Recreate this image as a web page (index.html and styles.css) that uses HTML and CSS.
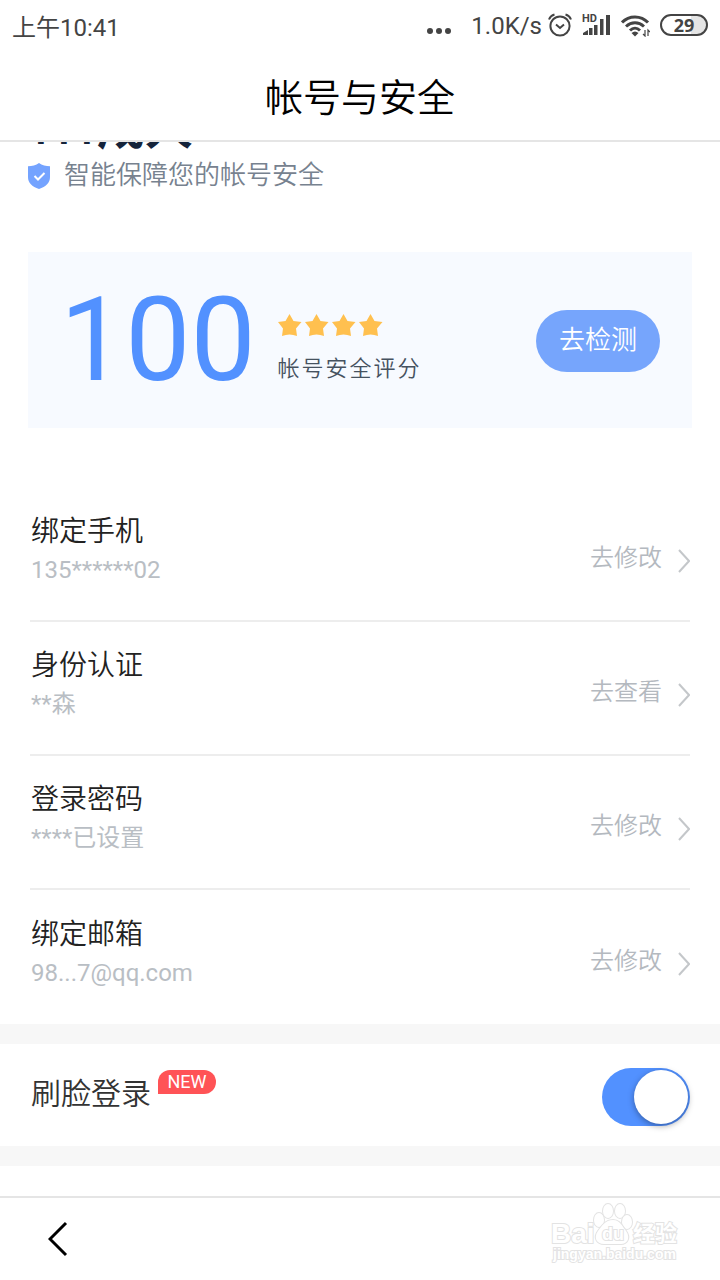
FILE: index.html
```
<!DOCTYPE html>
<html lang="zh-CN">
<head>
  <meta charset="UTF-8">
  <meta name="viewport" content="width=device-width, initial-scale=1.0">
  <title>帐号与安全</title>
  <link rel="stylesheet" href="styles.css">
</head>
<body>

  <!-- 状态栏 -->
  <div class="status-bar">
    <span class="time">上午10:41</span>
    <svg class="dots" width="24" height="8" viewBox="0 0 24 8" fill="#444">
      <circle cx="3" cy="4" r="3"/><circle cx="12" cy="4" r="3"/><circle cx="21" cy="4" r="3"/>
    </svg>
    <span class="speed">1.0K/s</span>
    <div class="status-icons">
      <svg width="24" height="24" viewBox="0 0 24 24" fill="none" stroke="#444" stroke-width="2">
        <circle cx="12" cy="13" r="9.6"/>
        <path d="M8 11.500l4 3.500 4-3.500M1 6.500C2 4 4 2.200 6.500 1.500M23 6.500C22 4 20 2.200 17.500 1.500"/>
      </svg>
      <svg width="29" height="24" viewBox="0 0 29 24" fill="#444">
        <text x="0" y="9" class="hd">HD</text>
        <path d="M1 22v-2l5-3v5zM7 15h3.500v7H7zM12 12h3.500v10H12zM18 6h3.500v16H18zM24 2h4v20h-4z"/>
      </svg>
      <svg width="29" height="24" viewBox="0 0 29 24" fill="none" stroke="#444" stroke-width="3">
        <path d="M1 9.500C8 2 20 2 27 9.500M5 13.500C10.500 8.500 17.500 8.500 23 13.500M9 17.500C12 14.500 16 14.500 19 17.500"/>
        <path d="M10.500 20q3.500-3 7 0l-3.500 3.500z" fill="#444" stroke="none"/>
        <path d="M24 17v6l-2-2M27 23v-6l2 2" stroke-width="1.200"/>
      </svg>
      <span class="battery">29</span>
    </div>
  </div>

  <header class="title-bar">
    <h1>帐号与安全</h1>
  </header>

  <main>
    <section class="intro">
      <h2><span>111</span>成人</h2>
      <p>
        <svg width="22" height="26" viewBox="0 0 22 26">
          <path d="M11 0C14 2.500 18 3.200 22 3.200V14c0 6-4 9.500-11 12C4 23.500 0 20 0 14V3.200C4 3.200 8 2.500 11 0z" fill="#74a3ff"/>
          <path d="M6.500 13l3.500 3.500 6.500-6.500" fill="none" stroke="#fff" stroke-width="2"/>
        </svg>
        智能保障您的帐号安全
      </p>
    </section>

    <section class="score-card">
      <strong class="score">100</strong>
      <div class="rating">
        <svg width="106" height="24" viewBox="0 0 106 24" fill="#ffc04f">
          <defs><path id="star" d="M11.500 0l4 7 8 1-5.500 6.500L19 22Q11.500 19 4 22L5 14.500 0 8l7.500-1z"/></defs>
          <use href="#star" x="0"/><use href="#star" x="27"/><use href="#star" x="54"/><use href="#star" x="81"/>
        </svg>
        <span>帐号安全评分</span>
      </div>
      <button class="check-btn">去检测</button>
    </section>

    <ul class="settings">
      <li>
        <div class="info"><h3>绑定手机</h3><p>135******02</p></div>
        <a href="#">去修改 <svg width="12" height="24" viewBox="0 0 12 24"><path d="M1 1l10 11L1 23"/></svg></a>
      </li>
      <li>
        <div class="info"><h3>身份认证</h3><p>**森</p></div>
        <a href="#">去查看 <svg width="12" height="24" viewBox="0 0 12 24"><path d="M1 1l10 11L1 23"/></svg></a>
      </li>
      <li>
        <div class="info"><h3>登录密码</h3><p>****已设置</p></div>
        <a href="#">去修改 <svg width="12" height="24" viewBox="0 0 12 24"><path d="M1 1l10 11L1 23"/></svg></a>
      </li>
      <li>
        <div class="info"><h3>绑定邮箱</h3><p>98...7@qq.com</p></div>
        <a href="#">去修改 <svg width="12" height="24" viewBox="0 0 12 24"><path d="M1 1l10 11L1 23"/></svg></a>
      </li>
    </ul>

    <section class="face-login">
      <label for="face">刷脸登录</label>
      <span class="new">NEW</span>
      <input type="checkbox" id="face" class="switch" checked>
    </section>
  </main>

  <footer class="bottom-bar">
    <button class="back" aria-label="返回">
      <svg width="20" height="36" viewBox="0 0 20 36"><path d="M18 2L2 18l16 16"/></svg>
    </button>
    <svg class="watermark" width="130" height="64" viewBox="0 0 130 64">
      <ellipse cx="49" cy="18" rx="5" ry="7"/><ellipse cx="58" cy="9" rx="5" ry="7"/>
      <ellipse cx="70" cy="9" rx="5" ry="7"/><ellipse cx="77" cy="20" rx="5" ry="7"/>
      <path d="M63 18c7 0 9 6 13 11 5 7 1 13-5 13H54c-7 0-11-6-6-13 4-5 7-11 15-11z"/>
      <text x="1" y="41" class="wm-big">Bai</text>
      <text x="52" y="38" class="wm-du">du</text>
      <text x="83" y="39" class="wm-cn">经验</text>
      <text x="3" y="57" class="wm-url">jingyan.baidu.com</text>
    </svg>
  </footer>

</body>
</html>
```
FILE: styles.css
```
* {
  box-sizing: border-box;
  margin: 0;
  padding: 0;
}

body {
  display: flex;
  flex-direction: column;
  height: 100vh;
  background: #fff;
  color: #222;
  font-family: Roboto, "Noto Sans CJK SC", sans-serif;
  font-weight: 350;
}

/* 状态栏 */
.status-bar {
  display: flex;
  align-items: center;
  height: 50px;
  padding: 0 12px;
  color: #444;
  font-size: 24px;
  font-weight: 400;
}

.dots {
  margin: 12px 20px 0 auto;
}

.speed {
  margin: 2px 6px 0 0;
}

.status-icons {
  display: flex;
  align-items: center;
  gap: 10px;
}

.hd {
  font-size: 11px;
  font-weight: 700;
}

.battery {
  width: 48px;
  height: 22px;
  border: 2px solid #444;
  border-radius: 11px;
  background: linear-gradient(to right, #fff 65%, #e5e5e5 65%);
  font-family: "Open Sans", sans-serif;
  font-size: 18px;
  font-weight: 700;
  line-height: 18px;
  text-align: center;
}

.title-bar {
  height: 92px;
  padding-top: 4px;
  border-bottom: 2px solid #e5e5e5;
  text-align: center;
}

.title-bar h1 {
  color: #000;
  font-size: 38px;
  font-weight: 350;
  line-height: 88px;
}

/* 内容区，向上滚动了一段 */
main {
  flex: 1;
  overflow: hidden;
}

.intro {
  margin-top: -42px;
  padding: 0 28px;
}

.intro h2 {
  color: #14233a;
  font-size: 48px;
  font-weight: 700;
  line-height: 56px;
}

.intro h2 span {
  font-size: 40px;
}

.intro p {
  display: flex;
  align-items: center;
  gap: 14px;
  color: #77828f;
  font-size: 26px;
  line-height: 32px;
}

.intro svg {
  margin-top: 2px;
}

.score-card {
  display: flex;
  align-items: center;
  height: 176px;
  margin: 61px 28px 60px;
  padding: 0 32px;
  background: #f7faff;
}

.score {
  color: #5291ff;
  font-size: 116px;
  font-weight: 400;
}

.rating {
  display: flex;
  flex-direction: column;
  gap: 12px;
  margin-left: 22px;
  padding-top: 16px;
  color: #46525f;
  font-size: 22px;
  letter-spacing: 2px;
}

.check-btn {
  width: 124px;
  height: 62px;
  margin: 2px 0 0 auto;
  padding-bottom: 8px;
  border: none;
  border-radius: 31px;
  background: #76a5fc;
  color: #fff;
  font: inherit;
  font-size: 26px;
}

/* 设置列表 */
.settings {
  padding: 0 30px;
  list-style: none;
}

.settings li {
  display: flex;
  justify-content: space-between;
  align-items: center;
  height: 134px;
  border-bottom: 2px solid #ededed;
}

.settings li:last-child {
  border-bottom: none;
}

.info {
  padding: 0 0 8px 1px;
}

.info h3 {
  font-size: 28px;
  font-weight: 350;
  line-height: 40px;
}

.info p {
  color: #b9bec4;
  font-size: 24px;
  font-weight: 400;
  line-height: 36px;
}

.settings a {
  display: flex;
  align-items: center;
  gap: 16px;
  padding-top: 2px;
  color: #b4b9bf;
  font-size: 24px;
  text-decoration: none;
}

.settings svg {
  margin-top: 12px;
  fill: none;
  stroke: #c4c7ca;
  stroke-width: 2;
}

.face-login {
  display: flex;
  align-items: center;
  height: 142px;
  padding: 0 30px;
  border-top: 20px solid #f7f7f7;
  border-bottom: 20px solid #f7f7f7;
}

.face-login label {
  padding: 0 0 8px 1px;
  color: #333;
  font-size: 30px;
}

.new {
  align-self: flex-start;
  width: 58px;
  margin: 26px 0 0 7px;
  border-radius: 12px 12px 12px 0;
  background: #ff5356;
  color: #fff;
  font-size: 18px;
  font-weight: 400;
  line-height: 24px;
  text-align: center;
}

.switch {
  appearance: none;
  display: flex;
  width: 88px;
  height: 58px;
  margin: 4px 0 0 auto;
  padding: 2px;
  border-radius: 29px;
  background: #ddd;
}

.switch::before {
  content: "";
  width: 54px;
  height: 54px;
  border-radius: 50%;
  background: #fff;
  box-shadow: 0 2px 6px rgba(0, 0, 0, 0.35);
}

.switch:checked {
  justify-content: flex-end;
  background: #5291ff;
}

.bottom-bar {
  display: flex;
  justify-content: space-between;
  align-items: center;
  height: 84px;
  padding: 0 40px 0 48px;
  border-top: 2px solid #e5e5e5;
}

.back {
  border: none;
  background: none;
  line-height: 0;
}

.back path {
  fill: none;
  stroke: #000;
  stroke-width: 3;
}

.watermark {
  margin-bottom: 10px;
  fill: #fff;
  stroke: #e3e3e3;
  stroke-width: 2;
  paint-order: stroke;
  font-family: "Liberation Sans", "Noto Sans CJK SC", sans-serif;
  font-weight: 700;
}

.wm-big {
  font-size: 28px;
}

.wm-du {
  font-size: 18px;
}

.wm-cn {
  font-size: 22px;
}

.wm-url {
  font-size: 14px;
}
```
